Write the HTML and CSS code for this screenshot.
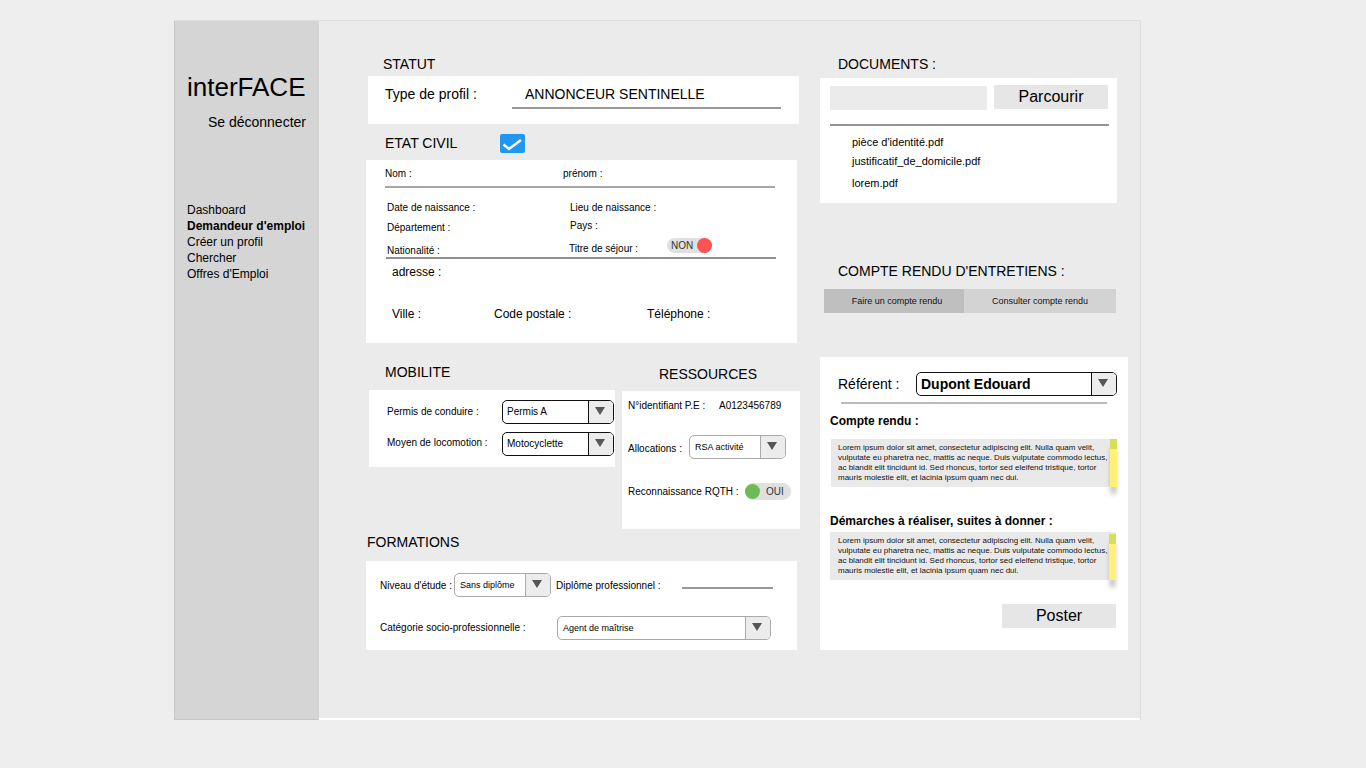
FILE: index.html

```html
<!DOCTYPE html>
<html lang="fr">
<head>
  <meta charset="UTF-8" />
  <meta name="viewport" content="width=device-width, initial-scale=1.0"/>
  <title>interFACE - Demandeur d'emploi</title>
  <link rel="stylesheet" href="styles.css">
</head>
<body>

  <div class="cadre">

    <aside class="menu">
      <div class="logo">interFACE</div>
      <a class="deconnexion">Se déconnecter</a>
      <nav class="nav">
        <a>Dashboard</a>
        <a class="actif">Demandeur d'emploi</a>
        <a>Créer un profil</a>
        <a>Chercher</a>
        <a>Offres d'Emploi</a>
      </nav>
    </aside>

    <main class="contenu">

      <section class="col-gauche">
        <h2 class="titre t-statut">STATUT</h2>
        <div class="panel p-statut">
          <span class="statut-label">Type de profil :</span>
          <span class="statut-valeur">ANNONCEUR SENTINELLE</span>
        </div>

        <div class="etat-tete">
          <h2 class="titre">ETAT CIVIL</h2>
          <span class="coche">
            <svg width="25" height="19" viewBox="0 0 25 19"><path d="M3.5 10.5 L9 15 L21 6" fill="none" stroke="#fff" stroke-width="2.5"/></svg>
          </span>
        </div>

        <div class="panel p-etat">
          <div class="ligne l-nom">
            <span class="c-nom">Nom :</span>
            <span>prénom :</span>
          </div>
          <div class="trait t-nom"></div>
          <div class="ligne l-naissance">
            <span class="c-civil">Date de naissance :</span>
            <span>Lieu de naissance :</span>
          </div>
          <div class="ligne l-dept">
            <span class="c-civil">Département :</span>
            <span class="pays">Pays :</span>
          </div>
          <div class="ligne l-natio">
            <span class="c-civil natio">Nationalité :</span>
            <span class="sejour">Titre de séjour :</span>
            <span class="toggle toggle-non">NON<i></i></span>
          </div>
          <div class="trait t-natio"></div>
          <div class="adresse">adresse :</div>
          <div class="ligne l-ville">
            <span class="c-ville">Ville :</span>
            <span class="c-code">Code postale :</span>
            <span>Téléphone :</span>
          </div>
        </div>

        <div class="duo">
          <div class="col-mobilite">
            <h2 class="titre t-mobilite">MOBILITE</h2>
            <div class="panel p-mobilite">
              <div class="ligne l-permis">
                <span class="c-mobilite">Permis de conduire :</span>
                <div class="liste liste-noire"><span>Permis A</span><b></b></div>
              </div>
              <div class="ligne l-moyen">
                <span class="c-mobilite">Moyen de locomotion :</span>
                <div class="liste liste-noire"><span>Motocyclette</span><b></b></div>
              </div>
            </div>
          </div>
          <div class="col-ressources">
            <h2 class="titre t-ressources">RESSOURCES</h2>
            <div class="panel p-ressources">
              <div class="ligne l-identifiant">
                <span class="c-identifiant">N°identifiant P.E :</span>
                <span>A0123456789</span>
              </div>
              <div class="ligne l-allocations">
                <span class="c-allocations">Allocations :</span>
                <div class="liste liste-alloc"><span>RSA activité</span><b></b></div>
              </div>
              <div class="ligne l-rqth">
                <span class="c-rqth">Reconnaissance RQTH :</span>
                <span class="toggle toggle-oui"><i></i>OUI</span>
              </div>
            </div>
          </div>
        </div>

        <h2 class="titre t-formations">FORMATIONS</h2>
        <div class="panel p-formations">
          <div class="ligne l-etude">
            <span class="c-etude">Niveau d'étude :</span>
            <div class="liste liste-etude"><span>Sans diplôme</span><b></b></div>
            <span class="c-diplome">Diplôme professionnel :</span>
            <div class="trait t-diplome"></div>
          </div>
          <div class="ligne l-categorie">
            <span class="c-categorie">Catégorie socio-professionnelle :</span>
            <div class="liste liste-categorie"><span>Agent de maîtrise</span><b></b></div>
          </div>
        </div>
      </section>

      <section class="col-droite">
        <h2 class="titre t-droite">DOCUMENTS :</h2>
        <div class="panel p-documents">
          <div class="upload">
            <div class="champ"></div>
            <button type="button" class="btn">Parcourir</button>
          </div>
          <div class="trait t-docs"></div>
          <ul class="fichiers">
            <li>pièce d'identité.pdf</li>
            <li>justificatif_de_domicile.pdf</li>
            <li>lorem.pdf</li>
          </ul>
        </div>

        <h2 class="titre t-droite t-compte">COMPTE RENDU D'ENTRETIENS :</h2>
        <div class="onglets">
          <span class="onglet onglet-actif">Faire un compte rendu</span>
          <span class="onglet">Consulter compte rendu</span>
        </div>

        <div class="panel p-compte">
          <div class="ligne l-referent">
            <span class="c-referent">Référent :</span>
            <div class="liste liste-noire liste-referent"><span>Dupont Edouard</span><b></b></div>
          </div>
          <div class="trait t-referent"></div>

          <h3 class="sous-titre st-compte">Compte rendu :</h3>
          <div class="zone zone-compte">
            Lorem ipsum dolor sit amet, consectetur adipiscing elit. Nulla quam velit,<br>
            vulputate eu pharetra nec, mattis ac neque. Duis vulputate commodo lectus,<br>
            ac blandit elit tincidunt id. Sed rhoncus, tortor sed eleifend tristique, tortor<br>
            mauris molestie elit, et lacinia ipsum quam nec dui.
            <div class="ascenseur"></div>
          </div>

          <h3 class="sous-titre st-demarches">Démarches à réaliser, suites à donner :</h3>
          <div class="zone zone-demarches">
            Lorem ipsum dolor sit amet, consectetur adipiscing elit. Nulla quam velit,<br>
            vulputate eu pharetra nec, mattis ac neque. Duis vulputate commodo lectus,<br>
            ac blandit elit tincidunt id. Sed rhoncus, tortor sed eleifend tristique, tortor<br>
            mauris molestie elit, et lacinia ipsum quam nec dui.
            <div class="ascenseur"></div>
          </div>

          <button type="button" class="btn btn-poster">Poster</button>
        </div>
      </section>

    </main>
  </div>

</body>
</html>
```

FILE: styles.css

```css
* { box-sizing: border-box; }
body { margin: 0; background: #eeeeee; color: #000; font-family: "Liberation Sans", Arial, sans-serif; }
h2, h3, ul { margin: 0; padding: 0; font-weight: normal; }

.cadre { display: flex; width: 967px; height: 700px; margin: 20px 0 0 174px; border-top: 1px solid #dedede; border-right: 1px solid #dcdcdc; }

/* menu de gauche */
.menu { width: 145px; padding: 51px 13px 0 12px; background: #d5d5d5; border-left: 1px solid #c6c6c6; border-bottom: 1px solid #c6c6c6; }
.logo { font-size: 26px; line-height: 30px; white-space: nowrap; }
.deconnexion { display: block; margin-top: 12px; font-size: 14px; line-height: 16px; text-align: right; }
.nav { margin-top: 72px; }
.nav a { display: block; font-size: 12px; line-height: 16px; white-space: nowrap; }
.nav .actif { font-weight: bold; }

.contenu { display: flex; flex: 1; gap: 20px; padding: 35px 0 0 47px; background: #ebebeb; border-bottom: 2px solid #fff; }
.col-gauche { width: 434px; }
.col-droite { width: 308px; }

.titre { font-size: 14px; line-height: 16px; white-space: nowrap; }
.panel { background: #fff; font-size: 10px; }
.ligne { display: flex; align-items: center; white-space: nowrap; }
.trait { height: 2px; background: #999; }

/* statut */
.t-statut { margin-left: 17px; }
.p-statut { display: flex; width: 431px; height: 48px; margin: 4px 0 0 2px; padding: 9px 0 0 17px; font-size: 14px; line-height: 18px; }
.statut-label { width: 127px; }
.statut-valeur { width: 269px; height: 24px; padding-left: 13px; border-bottom: 2px solid #999; }

/* etat civil */
.etat-tete { display: flex; align-items: center; margin: 10px 0 0 19px; }
.etat-tete .titre { width: 115px; margin-bottom: 2px; }
.coche { width: 25px; height: 19px; background: #2196f3; border-radius: 2px; }
.coche svg { display: block; }
.p-etat { width: 431px; height: 183px; margin-top: 7px; padding-left: 19px; }
.l-nom { height: 26px; }
.c-nom { width: 178px; }
.t-nom { width: 390px; background: #a6a6a6; }
.l-naissance { height: 12px; margin: 13px 0 0 2px; }
.c-civil { width: 183px; }
.l-dept { height: 16px; margin: 6px 0 0 2px; }
.pays { margin-bottom: 4px; }
.l-natio { height: 22px; margin-left: 2px; align-items: flex-end; line-height: 12px; }
.sejour { width: 98px; margin: 0 0 2px -1px; }
.t-natio { width: 390px; margin-left: 1px; background: #8f8f8f; }
.adresse { margin: 6px 0 0 7px; font-size: 12px; line-height: 14px; }
.l-ville { margin: 28px 0 0 7px; font-size: 12px; line-height: 14px; }
.c-ville { width: 102px; }
.c-code { width: 153px; }

/* interrupteurs */
.toggle { display: flex; align-items: center; background: #e0e0e0; color: #333; font-size: 10px; border-radius: 9px; }
.toggle i { width: 15px; height: 15px; border-radius: 50%; }
.toggle-non { justify-content: space-between; width: 45px; height: 15px; margin-bottom: 4px; padding-left: 4px; }
.toggle-non i { background: #ff5252; }
.toggle-oui { width: 46px; height: 17px; }
.toggle-oui i { margin-right: 6px; background: #6cbb55; }

/* listes deroulantes */
.liste { display: flex; height: 24px; background: #fff; border: 1px solid #aaa; border-radius: 5px; overflow: hidden; }
.liste span { flex: 1; padding-left: 5px; line-height: 22px; font-size: 9px; }
.liste b { position: relative; width: 25px; background: #ececec; border-left: 1px solid #aaa; }
.liste b::after { content: ""; position: absolute; top: 6px; left: 6px; border-top: 8px solid #555; border-left: 5.5px solid transparent; border-right: 5.5px solid transparent; }
.liste-noire { border-color: #111; }
.liste-noire span { padding-left: 4px; font-size: 10px; }
.liste-noire b { border-left-color: #111; }

/* mobilite et ressources */
.duo { display: flex; }
.col-mobilite { width: 256px; }
.t-mobilite { margin: 21px 0 0 19px; }
.p-mobilite { width: 246px; height: 77px; margin: 10px 0 0 3px; padding: 10px 0 0 18px; }
.c-mobilite { width: 115px; }
.l-permis .c-mobilite { margin-bottom: 2px; }
.l-moyen .c-mobilite { margin-bottom: 4px; }
.l-permis .liste, .l-moyen .liste { width: 112px; }
.l-moyen { margin-top: 8px; }
.col-ressources { width: 178px; }
.t-ressources { margin: 23px 0 0 37px; }
.p-ressources { height: 138px; margin-top: 9px; padding: 6px 0 0 6px; }
.l-identifiant { height: 16px; }
.c-identifiant { width: 91px; }
.l-allocations { margin-top: 22px; }
.c-allocations { width: 61px; margin-top: 2px; }
.liste-alloc { width: 97px; }
.l-rqth { margin-top: 24px; }
.c-rqth { width: 117px; }

/* formations */
.t-formations { margin: 5px 0 0 1px; }
.p-formations { width: 431px; height: 89px; margin-top: 11px; padding: 12px 0 0 14px; }
.c-etude { width: 74px; }
.liste-etude { width: 97px; }
.c-diplome { width: 126px; margin-left: 5px; }
.t-diplome { width: 91px; margin-top: 6px; }
.l-categorie { margin-top: 19px; }
.c-categorie { width: 177px; margin-bottom: 2px; }
.liste-categorie { width: 214px; }

/* documents */
.t-droite { margin-left: 18px; }
.p-documents { width: 297px; height: 125px; margin-top: 6px; padding: 7px 0 0 10px; }
.upload { display: flex; gap: 7px; }
.champ { width: 157px; height: 24px; margin-top: 1px; background: #ebebeb; }
.btn { width: 114px; height: 24px; padding: 0; background: #e6e6e6; border: none; font-family: inherit; font-size: 16px; color: #000; }
.t-docs { width: 279px; margin-top: 14px; background: #949494; }
.fichiers { padding-left: 22px; list-style: none; font-size: 11px; line-height: 14px; }
.fichiers li:nth-child(1) { margin-top: 9px; }
.fichiers li:nth-child(2) { margin-top: 5px; }
.fichiers li:nth-child(3) { margin-top: 8px; }

/* compte rendu */
.t-compte { margin-top: 60px; }
.onglets { display: flex; height: 24px; margin: 10px 0 0 4px; font-size: 9px; line-height: 24px; text-align: center; color: #111; }
.onglet { width: 152px; background: #d3d3d3; }
.onglet-actif { width: 140px; padding-left: 6px; background: #bfbfbf; }
.p-compte { height: 293px; margin-top: 44px; padding-top: 15px; }
.l-referent { margin-left: 18px; }
.c-referent { width: 78px; font-size: 14px; }
.liste-referent { width: 201px; }
.liste-referent span { font-size: 14px; font-weight: bold; line-height: 22px; }
.t-referent { width: 266px; margin: 6px 0 0 21px; background: #bbb; }
.sous-titre { margin-left: 10px; font-size: 12px; line-height: 14px; font-weight: bold; }
.st-compte { margin-top: 10px; }
.st-demarches { margin-top: 27px; }
.zone { position: relative; width: 286px; height: 48px; padding-top: 4px; background: #e9e9e9; font-size: 8px; line-height: 10px; white-space: nowrap; color: #111; }
.zone-compte { margin: 11px 0 0 11px; padding-left: 7px; }
.zone-demarches { margin: 4px 0 0 10px; padding-left: 8px; }
.ascenseur { position: absolute; top: 0; right: 0; bottom: 0; width: 7px; background: linear-gradient(#d4e157 10px, #fff176 10px); box-shadow: 0 8px 5px -1px rgba(0, 0, 0, .28); }
.zone-demarches .ascenseur { top: 2px; }
.btn-poster { display: block; margin: 24px 0 0 182px; }
```
